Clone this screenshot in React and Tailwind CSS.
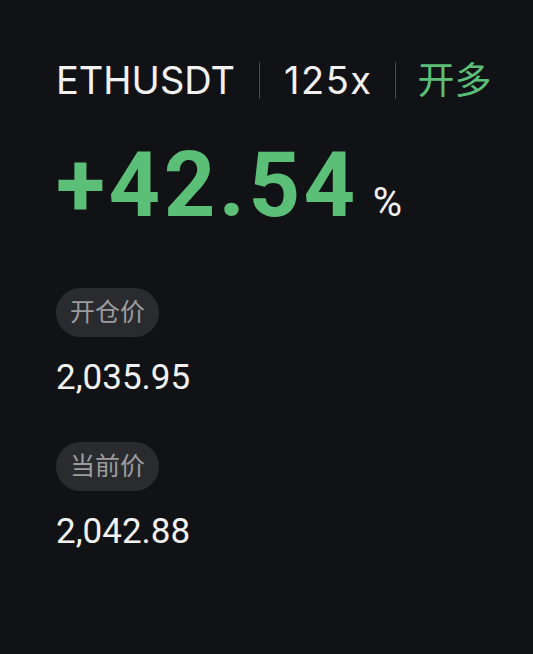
const font = { fontFamily: '"Roboto", "Noto Sans CJK SC", sans-serif' };
const headFont = { fontFamily: '"Inter", "Noto Sans CJK SC", sans-serif' };

function PriceBlock({ label, value, first }) {
  return (
    <div className={first ? "mt-[57px]" : "mt-[47px]"}>
      <div className="inline-flex h-[49px] items-center rounded-full bg-[#2a2b2e] px-[14px] text-[25px] text-[#9c9c9e]">
        {label}
      </div>
      <div className="mt-[23px] text-[35px] leading-none text-[#f2f2f2]">{value}</div>
    </div>
  );
}

export default function App() {
  return (
    <div className="h-[654px] w-full bg-[#111215] pl-[56px] pt-[61px]" style={font}>
      <div className="flex h-[38px] items-center text-[38px] leading-none text-[#f2f2f2]" style={headFont}>
        <span>ETHUSDT</span>
        <span className="mx-[24px] h-[37px] w-px bg-[#4a4b4e]" />
        <span className="tracking-[1.5px]">125x</span>
        <span className="mx-[22px] h-[37px] w-px bg-[#4a4b4e]" />
        <span className="text-[37px] text-[#5cbf78]">开多</span>
      </div>

      <div className="mt-[42px] flex items-baseline leading-none">
        <span className="text-[90px] font-bold tracking-[3.5px] text-[#5cbf78]">+42.54</span>
        <span className="ml-[14px] text-[40px] text-[#f2f2f2]">%</span>
      </div>

      <PriceBlock label="开仓价" value="2,035.95" first />
      <PriceBlock label="当前价" value="2,042.88" />
    </div>
  );
}
